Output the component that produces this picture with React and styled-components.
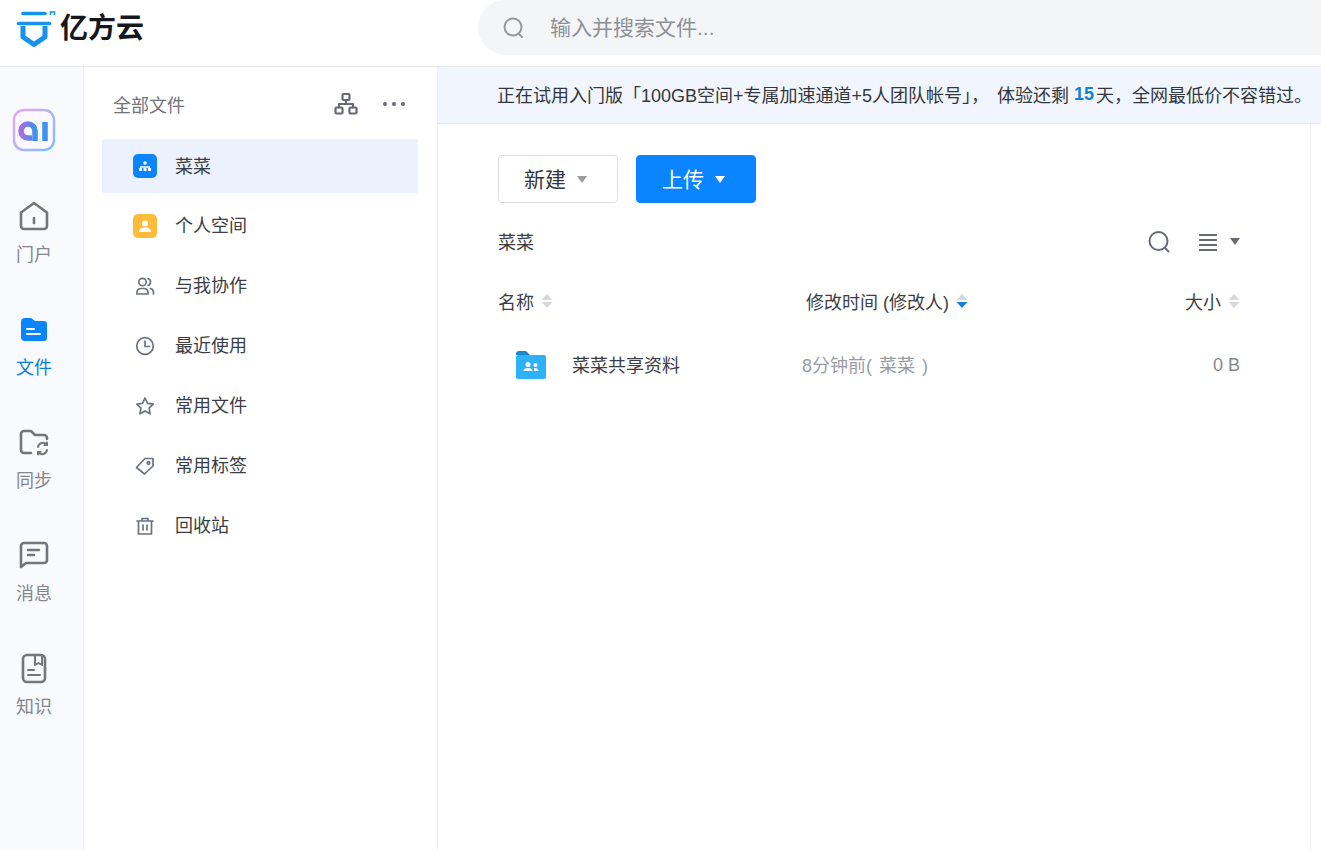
import React from "react";
import styled, { createGlobalStyle } from "styled-components";

const Global = createGlobalStyle`
  html, body { margin: 0; padding: 0; background: #fff; overflow: hidden; }
  body { font-family: "Liberation Sans", "Noto Sans CJK SC", sans-serif; color: #33353c; }
  * { box-sizing: border-box; }
`;

const Page = styled.div`display:flex;flex-direction:column;width:1321px;height:850px;overflow:hidden;`;
const Header = styled.header`display:flex;height:67px;flex:none;border-bottom:1px solid #e6e8ec;background:#fff;`;
const Brand = styled.div`display:flex;align-items:center;width:478px;height:56px;padding-left:16px;gap:3px;`;
const BrandName = styled.span`font-size:28px;font-weight:700;color:#15181d;line-height:1;padding-top:2px;`;
const SearchBox = styled.div`flex:1;height:55px;background:#f4f5f7;border-radius:28px 0 0 28px;display:flex;align-items:center;padding-left:24px;gap:24px;color:#8d9096;font-size:21px;`;
const SearchHint = styled.span`padding-bottom:3px;`;
const Body = styled.div`display:flex;flex:1;min-height:0;`;
const Rail = styled.nav`width:84px;flex:none;background:#f8fafd;border-right:1px solid #eef0f3;padding:41px 15px 0 0;display:flex;flex-direction:column;align-items:center;`;
const AiBadge = styled.div`margin-bottom:48px;line-height:0;`;
const RailItem = styled.div`height:113px;flex:none;display:flex;flex-direction:column;align-items:center;gap:8px;font-size:18px;line-height:26px;color:${p=>p.$active?"#0a7fd6":"#85878d"};`;
const Side = styled.aside`width:354px;flex:none;border-right:1px solid #eceef1;padding:0 19px 0 18px;`;
const SideHead = styled.div`height:72px;display:flex;align-items:center;padding:2px 12px 0 11px;font-size:18px;color:#71747b;`;
const SideTitle = styled.span`flex:1;`;
const SideTools = styled.div`display:flex;align-items:center;gap:24px;`;
const NavItem = styled.div`height:54px;margin-bottom:6px;display:flex;align-items:center;padding-left:31px;gap:18px;font-size:18px;color:#3b3e44;border-radius:2px;background:${p=>p.$active?"#ebf2fd":"transparent"};`;
const NavIcon = styled.span`width:24px;height:24px;display:flex;align-items:center;justify-content:center;flex:none;`;
const NavLabel = styled.span`padding-bottom:${p=>p.$active?2:4}px;`;
const Main = styled.main`flex:1;display:flex;flex-direction:column;min-width:0;`;
const Banner = styled.div`height:57px;flex:none;background:#f1f6fe;border-bottom:1px solid #e3e9f2;display:flex;align-items:center;padding:0 0 2px 59px;font-size:18px;color:#33363c;white-space:nowrap;`;
const BannerGap = styled.span`display:inline-block;width:8px;`;
const Count = styled.b`color:#1380d8;margin:0 2px 0 5px;`;
const Panel = styled.section`width:873px;flex:1;border-right:1px solid #f0f1f3;padding:31px 70px 0 60px;`;
const Actions = styled.div`display:flex;gap:18px;`;
const Btn = styled.button`width:120px;height:48px;border-radius:4px;font:21px "Liberation Sans","Noto Sans CJK SC",sans-serif;padding:0 5px 2px 0;display:flex;align-items:center;justify-content:center;gap:11px;border:1px solid ${p=>p.$primary?"#0a84ff":"#dcdee2"};background:${p=>p.$primary?"#0a84ff":"#fff"};color:${p=>p.$primary?"#fff":"#33363c"};`;
const Caret = styled.i`display:block;width:0;height:0;border-left:5px solid transparent;border-right:5px solid transparent;border-top:7px solid ${p=>p.$c};margin-top:3px;`;
const Crumbs = styled.div`display:flex;align-items:center;height:30px;margin-top:24px;font-size:18px;color:#3b3e44;`;
const CrumbTitle = styled.span`flex:1;padding-bottom:2px;`;
const ViewTools = styled.div`display:flex;align-items:center;gap:13px;color:#666a73;`;
const SearchTool = styled.span`display:flex;margin-right:15px;`;
const ColHead = styled.div`display:grid;grid-template-columns:308px 1fr auto;align-items:center;height:30px;margin-top:29px;font-size:18px;color:#3b3e44;`;
const HeadCell = styled.span`display:flex;align-items:center;gap:7px;`;
const FileRow = styled.div`display:grid;grid-template-columns:304px 1fr auto;align-items:center;height:48px;margin-top:25px;font-size:18px;`;
const FileName = styled.span`display:flex;align-items:center;gap:26px;padding-left:18px;color:#3b3e44;`;
const FileLabel = styled.span`padding-bottom:2px;`;
const Muted = styled.span`color:#9a9ca1;word-spacing:2px;padding-bottom:2px;`;
const Size = styled.span`color:#85878d;`;

const Sort = ({active}) => (
  <svg width="12" height="16" viewBox="0 0 12 16"><path d="M6 1l5.500 6H.5z" fill="#d5d8de"/><path d="M6 15l5.500-6H.5z" fill={active?"#1380e0":"#d5d8de"}/></svg>
);
const Line = ({children,size=24,stroke="#6d7280",sw=2,box="0 0 24 24"}) => (
  <svg width={size} height={size} viewBox={box} fill="none" stroke={stroke} strokeWidth={sw} strokeLinecap="round" strokeLinejoin="round">{children}</svg>
);

export default function App(){
  return (<Page><Global/>
    <Header>
      <Brand>
        <svg width="41" height="38" viewBox="0 0 41 38" fill="none">
          <path d="M7 4.500h22" stroke="#1592ee" strokeWidth="3.600" strokeLinecap="round"/>
          <path d="M2.500 14.500h31" stroke="#1592ee" strokeWidth="3.600" strokeLinecap="round"/>
          <path d="M34.500 6V3h4v3" stroke="#1592ee" strokeWidth="1.600"/>
          <path d="M7 17v11l11 7.500L29 28V17" stroke="#1592ee" strokeWidth="5" strokeLinejoin="round"/>
        </svg>
        <BrandName>亿方云</BrandName>
      </Brand>
      <SearchBox>
        <Line stroke="#96989c" size={24}><circle cx="11" cy="11" r="8.500"/><path d="M17 18l3 3"/></Line>
        <SearchHint>输入并搜索文件...</SearchHint>
      </SearchBox>
    </Header>
    <Body>
      <Rail>
        <AiBadge>
          <svg width="44" height="44" viewBox="0 0 44 44" fill="none">
            <defs>
              <linearGradient id="aib" x1="0" y1="0" x2="1" y2="1"><stop offset="0" stopColor="#e8a9ee"/><stop offset="1" stopColor="#7fc0fa"/></linearGradient>
              <linearGradient id="aif" x1="0" y1="0" x2="1" y2="0"><stop offset="0" stopColor="#a66fe0"/><stop offset="1" stopColor="#3f92ee"/></linearGradient>
            </defs>
            <rect x="2" y="2" width="40" height="40" rx="10" fill="#fbf9ff" stroke="url(#aib)" strokeWidth="2.500"/>
            <path d="M23 33v-10a7 7 0 1 0-7 7h4" stroke="url(#aif)" strokeWidth="5.500"/>
            <path d="M33 14v19" stroke="#3f92ee" strokeWidth="5.500"/>
          </svg>
        </AiBadge>
        <RailItem>
          <Line size={34} box="0 0 34 34" sw={2.600} stroke="#74767f"><path d="M4 12.500L17 3l13 9.500V26a3 3 0 0 1-3 3H7a3 3 0 0 1-3-3z"/><path d="M17 18v5"/></Line>
          门户
        </RailItem>
        <RailItem $active>
          <svg width="34" height="34" viewBox="0 0 34 34"><path d="M4 9a4 4 0 0 1 4-4h6l4 3h9a3 3 0 0 1 3 3v14a3 3 0 0 1-3 3H8a4 4 0 0 1-4-4z" fill="#0a84ff"/><path d="M10 16h7M10 21h13" stroke="#fff" strokeWidth="2" strokeLinecap="round"/></svg>
          文件
        </RailItem>
        <RailItem>
          <Line size={34} box="0 0 34 34" sw={2.600} stroke="#74767f"><path d="M14 27H7a3 3 0 0 1-3-3V8a3 3 0 0 1 3-3h7l4 4h9a3 3 0 0 1 3 3v1"/><path d="M21 21a5 5 0 0 1 9-2M30 24a5 5 0 0 1-9 2" strokeWidth="2"/><path d="M30 16.500V19h-2.500M21 28.500V26h2.500" strokeWidth="2"/></Line>
          同步
        </RailItem>
        <RailItem>
          <Line size={34} box="0 0 34 34" sw={2.600} stroke="#74767f"><path d="M4 7a3 3 0 0 1 3-3h20a3 3 0 0 1 3 3v14a3 3 0 0 1-3 3H9l-5 4z"/><path d="M11 11h11M11 16h6"/></Line>
          消息
        </RailItem>
        <RailItem>
          <Line size={34} box="0 0 34 34" sw={2.600} stroke="#74767f"><rect x="6" y="3" width="22" height="27" rx="4"/><path d="M18 3v10l3.500-2 3.500 2V3" strokeWidth="2"/><path d="M11 18h6M11 23h12" strokeWidth="2"/></Line>
          知识
        </RailItem>
      </Rail>
      <Side>
        <SideHead>
          <SideTitle>全部文件</SideTitle>
          <SideTools>
            <Line stroke="#666a76" size={24} sw={2.200}><rect x="8.500" y="2" width="7" height="6" rx="1"/><rect x="1.500" y="15.500" width="7" height="6" rx="1"/><rect x="15.500" y="15.500" width="7" height="6" rx="1"/><path d="M12 8v4M5 15.500V12h14v3.500"/></Line>
            <svg width="24" height="6" viewBox="0 0 24 6"><circle cx="3" cy="3" r="2" fill="#666a76"/><circle cx="12" cy="3" r="2" fill="#666a76"/><circle cx="21" cy="3" r="2" fill="#666a76"/></svg>
          </SideTools>
        </SideHead>
        <NavItem $active>
          <NavIcon><svg width="24" height="24" viewBox="0 0 24 24"><rect width="24" height="24" rx="5" fill="#0a84ff"/><circle cx="12" cy="9" r="1.800" fill="#fff"/><path d="M7 13h10" stroke="#fff" strokeWidth="1.500"/><rect x="6" y="14" width="3" height="3" fill="#fff"/><rect x="10.500" y="14" width="3" height="3" fill="#fff"/><rect x="15" y="14" width="3" height="3" fill="#fff"/></svg></NavIcon>
          <NavLabel $active>菜菜</NavLabel>
        </NavItem>
        <NavItem>
          <NavIcon><svg width="24" height="24" viewBox="0 0 24 24"><rect width="24" height="24" rx="5" fill="#fdbb3b"/><circle cx="12" cy="9.500" r="3" fill="#fff"/><path d="M6 18c0-3 2.500-4.500 6-4.500s6 1.500 6 4.500z" fill="#fff"/></svg></NavIcon>
          <NavLabel>个人空间</NavLabel>
        </NavItem>
        <NavItem>
          <NavIcon><Line size={20} box="0 0 20 20" sw={1.700} stroke="#6d7280"><circle cx="7.500" cy="6" r="3.700"/><path d="M2 18v-2a4 4 0 0 1 4-3.500h3a4 4 0 0 1 4 3.500v2z"/><path d="M13 2.500a3.700 3.700 0 0 1 0 7M15.500 12.500a4 4 0 0 1 3 3.500v2"/></Line></NavIcon>
          <NavLabel>与我协作</NavLabel>
        </NavItem>
        <NavItem>
          <NavIcon><Line size={20} box="0 0 20 20" sw={1.700} stroke="#6d7280"><circle cx="10" cy="10" r="8.300"/><path d="M10 5v5.500h4.500"/></Line></NavIcon>
          <NavLabel>最近使用</NavLabel>
        </NavItem>
        <NavItem>
          <NavIcon><Line size={20} box="0 0 20 20" sw={1.700} stroke="#6d7280"><path d="M10 2l2.500 5.300 5.700.8-4.100 4 1 5.700-5.100-2.700-5.100 2.700 1-5.700-4.100-4 5.700-.8z"/></Line></NavIcon>
          <NavLabel>常用文件</NavLabel>
        </NavItem>
        <NavItem>
          <NavIcon><Line size={20} box="0 0 20 20" sw={1.700} stroke="#6d7280"><path d="M1.500 11.500L10 2.500h8v7.500l-8.500 8z"/><circle cx="13.500" cy="7" r="1.300"/></Line></NavIcon>
          <NavLabel>常用标签</NavLabel>
        </NavItem>
        <NavItem>
          <NavIcon><Line size={20} box="0 0 20 20" sw={1.700} stroke="#6d7280"><path d="M2 5h16M7 5V2.500h6V5M3.500 5v13h13V5M8 9v5M12 9v5"/></Line></NavIcon>
          <NavLabel>回收站</NavLabel>
        </NavItem>
      </Side>
      <Main>
        <Banner>正在试用入门版「100GB空间+专属加速通道+5人团队帐号」，<BannerGap/>体验还剩<Count>15</Count>天，全网最低价不容错过。</Banner>
        <Panel>
          <Actions>
            <Btn>新建<Caret $c="#9a9ca1"/></Btn>
            <Btn $primary>上传<Caret $c="#fff"/></Btn>
          </Actions>
          <Crumbs>
            <CrumbTitle>菜菜</CrumbTitle>
            <ViewTools>
              <SearchTool><Line size={24} stroke="#666a73" sw={2}><circle cx="11.500" cy="11" r="9"/><path d="M18 18l3.500 3.500"/></Line></SearchTool>
              <svg width="18" height="18" viewBox="0 0 18 18"><path d="M0 2h18M0 7h18M0 12h18M0 17h18" stroke="#666a73" strokeWidth="2"/></svg>
              <svg width="10" height="8" viewBox="0 0 10 8"><path d="M0 0h10L5 7z" fill="#666a73"/></svg>
            </ViewTools>
          </Crumbs>
          <ColHead>
            <HeadCell>名称<Sort/></HeadCell>
            <HeadCell>修改时间 (修改人)<Sort active/></HeadCell>
            <HeadCell>大小<Sort/></HeadCell>
          </ColHead>
          <FileRow>
            <FileName>
              <svg width="30" height="28" viewBox="0 0 30 28"><path d="M0 3a3 3 0 0 1 3-3h7l4 4h-14z" fill="#1b87c9"/><rect y="4" width="30" height="24" rx="2" fill="#2db2f7"/><circle cx="12" cy="13.500" r="2.500" fill="#fff"/><path d="M7.500 20c0-2 2-3 4.500-3s4.500 1 4.500 3z" fill="#fff"/><circle cx="19.500" cy="14" r="2" fill="#fff"/><path d="M18 17c2.500 0 4.500.8 4.500 3h-4.500z" fill="#fff"/></svg>
              <FileLabel>菜菜共享资料</FileLabel>
            </FileName>
            <Muted>8分钟前( 菜菜 )</Muted>
            <Size>0 B</Size>
          </FileRow>
        </Panel>
      </Main>
    </Body>
  </Page>);
}
